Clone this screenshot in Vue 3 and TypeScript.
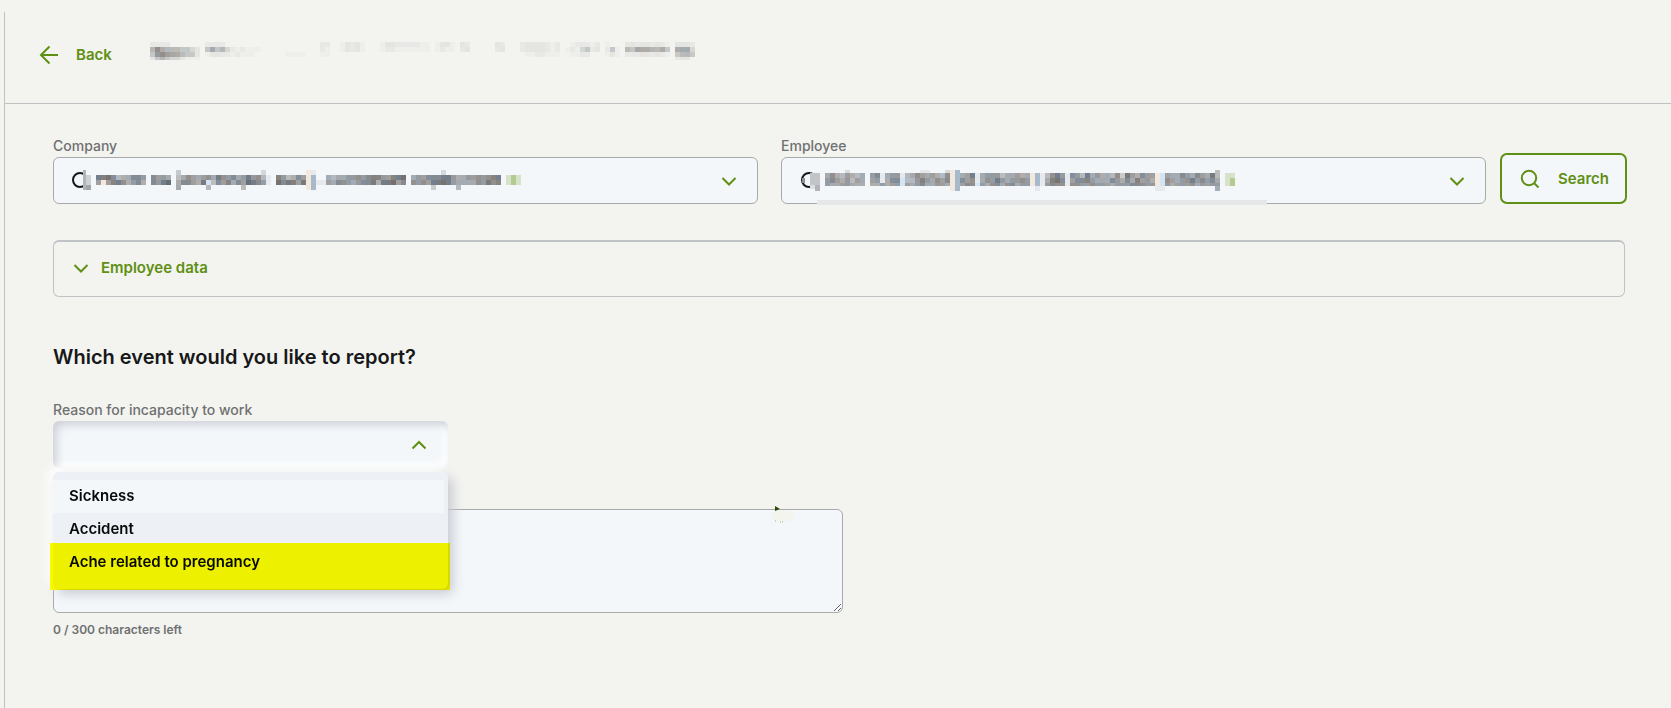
<script setup lang="ts">
import { ref } from 'vue'

interface Cell { x: number; y: number; h: number; fill: string }
// A run is: row index, first column, one character per cell.
type Run = [number, number, string]

const tones = [[118, 113, 110], [98, 112, 128], [104, 107, 112], [122, 116, 112], [100, 110, 118]]
const accents: Record<string, string> = {
  g: '#d6e2c9', G: '#b4ca8e', p: '#f3e8dd', b: '#a7bacb', s: '#d3e5f5', w: '#e6eaee', f: '#eeefeb', l: '#e8e9e6',
}

function mosaic(runs: Run[], heights: number[], back: number[]): Cell[] {
  const tops = heights.map((_, i) => heights.slice(0, i).reduce((a, b) => a + b, 0))
  const cells: Cell[] = []
  for (const [row, start, text] of runs) {
    Array.from(text).forEach((c, i) => {
      if (c === '.') return
      const col = start + i
      const k = parseInt(c, 10) / 9
      const tone = tones[(col * 3 + row * 2 + (col >> 2)) % 5]
      const fill = accents[c] ?? `rgb(${tone.map((t, n) => Math.round(back[n] + (t - back[n]) * k)).join(',')})`
      cells.push({ x: col * 5, y: tops[row], h: heights[row], fill })
    })
  }
  return cells
}

const titleCells = mosaic([
  [0, 0, 'llll'], [0, 11, 'llll'], [0, 34, 'll'], [0, 38, 'f1l1f'], [0, 46, 'f11lllllff'],
  [0, 57, 'f11f'], [0, 62, '1l'], [0, 69, '1l'], [0, 74, 'l1111lfl'], [0, 84, 'flllfl'],
  [0, 91, 'f'], [0, 95, '11l11l1lf'], [0, 105, '111l'],
  [1, 0, '4754443321'], [1, 11, '35342lflfff'], [1, 34, 'lf'], [1, 38, 'f1l1f'], [1, 46, 'fllfffffff'],
  [1, 57, 'flff'], [1, 62, 'l1'], [1, 69, 'l1'], [1, 74, 'l1111lfl'], [1, 83, 'flf23l1'],
  [1, 91, 'l3f'], [1, 95, '435554453'], [1, 105, '5552'],
  [2, 0, '3676554331'], [2, 11, 'f11llflfff'], [2, 27, 'ffff'], [2, 34, 'ff'], [2, 75, 'ffllfff'], [2, 84, 'ffll'], [2, 91, 'f1f'], [2, 95, 'lll11l1lf'], [2, 105, '3443'],
  [3, 0, '1343221fff'], [3, 105, 'l11'],
], [5, 5, 5, 3], [243, 244, 239])

const companyCells = mosaic([
  [0, 19, '3'], [0, 36, '2'], [0, 45, 'pw'], [0, 72, '2'],
  [1, 3, '8897455776'], [1, 14, '7665'], [1, 19, '457656758767568674w'], [1, 39, '864576pb'],
  [1, 49, '5455667678866889'], [1, 66, '566777886556676788'], [1, 85, 'gGg'],
  [2, 3, '6p68875675'], [2, 14, '7689'], [2, 19, '577658s47685769876w'], [2, 39, '978868pbww'],
  [2, 49, '6577656778588967'], [2, 66, '767688986555576878'], [2, 85, 'gGg'],
  [3, 19, '5'], [3, 25, '4'], [3, 32, '4'], [3, 45, 'pb'], [3, 70, '3'], [3, 75, '4'],
], [5, 5, 5, 5], [243, 247, 250])

const employeeCells = mosaic([
  [0, 4, '2'], [0, 19, '11'], [0, 24, '2pb'], [0, 78, '4'],
  [1, 0, '57546545'], [1, 9, '67w566w457656547pb568w5666455655'],
  [1, 41, 'pbw4786w76485655473865766w6545ps65576576584'],
  [2, 0, '67656465'], [2, 9, '66w577s446865767pb767w5768656676'],
  [2, 41, 'pbw5897w67786555765758665w6665ps76567867675'],
  [3, 0, '65566555'], [3, 9, '556566s656755665pb677s6577577566'],
  [3, 41, 'pbw6777w776676665666777665w665ps65666756666'],
  [4, 25, 'pb'], [4, 42, 'w'], [4, 66, 'ww'], [4, 78, '5'],
].map(([row, start, text]) => [row, start, start === 41 ? `${(text as string).slice(0, 25)}p${(text as string).slice(31, 43)}` : text] as Run)
  .concat([[1, 80, 'gg'], [2, 80, 'gG'], [3, 80, 'gG']]), [3, 5, 5, 3, 5], [243, 247, 250])

const options = ['Sickness', 'Accident', 'Ache related to pregnancy']
const selected = ref('')
const note = ref('')
</script>

<template>
  <div class="page">
    <header class="topbar">
      <a href="#" class="back">
        <svg width="20" height="20" viewBox="0 0 20 20"><path d="M19 10H2M10.500 1.500L2 10L10.500 18.500" /></svg>
        Back
      </a>
      <svg class="title" width="545" height="18" viewBox="0 0 545 18" shape-rendering="crispEdges" aria-hidden="true">
        <rect v-for="(c, i) in titleCells" :key="i" :x="c.x" :y="c.y" width="5" :height="c.h" :fill="c.fill" />
      </svg>
    </header>

    <main class="content">
      <form class="filters" @submit.prevent>
        <div class="field">
          <label for="company">Company</label>
          <div class="control">
            <select id="company"><option value=""></option></select>
            <svg class="value" width="500" height="24" viewBox="0 0 500 24" aria-hidden="true">
              <circle cx="10" cy="12" r="7" class="lens" />
              <g shape-rendering="crispEdges" transform="translate(11 2)">
                <path d="M2 0h3v20H2z" fill="#b3b6b9" />
                <path d="M5 5h5v10H5z" fill="#ced0d2" />
                <path d="M5 15h5v5H5z" fill="#a4a6a8" />
                <rect v-for="(c, i) in companyCells" :key="i" :x="c.x" :y="c.y" width="5" :height="c.h" :fill="c.fill" />
              </g>
            </svg>
            <svg class="chevron" width="16" height="16" viewBox="0 0 16 16"><path d="M1.500 5L8 11.500L14.500 5" /></svg>
          </div>
        </div>
        <div class="field">
          <label for="employee">Employee</label>
          <div class="control">
            <select id="employee"><option value=""></option></select>
            <svg class="value" width="500" height="24" viewBox="0 0 500 24" aria-hidden="true">
              <circle cx="11" cy="12" r="7" class="lens" />
              <g shape-rendering="crispEdges" transform="translate(27 2)">
                <path d="M-15 3h10v12h-10z" fill="#c2c4c7" />
                <path d="M-10 15h5v6h-5z" fill="#b1b3b6" />
                <path d="M-15 15h5v4h-5z" fill="#dcdfe2" />
                <path d="M-23 8h3v5h-3z" fill="#8d9092" />
                <rect v-for="(c, i) in employeeCells" :key="i" :x="c.x" :y="c.y" width="5" :height="c.h" :fill="c.fill" />
              </g>
            </svg>
            <span class="smear"></span>
            <svg class="chevron" width="16" height="16" viewBox="0 0 16 16"><path d="M1.500 5L8 11.500L14.500 5" /></svg>
          </div>
        </div>
        <button type="submit" class="search">
          <svg width="20" height="20" viewBox="0 0 20 20"><circle cx="9" cy="9" r="7.200" /><path d="M14 14L18.500 18.500" /></svg>
          Search
        </button>
      </form>

      <button type="button" class="panel">
        <svg width="16" height="16" viewBox="0 0 16 16"><path d="M1.500 5L8 11.500L14.500 5" /></svg>
        Employee data
      </button>

      <h2>Which event would you like to report?</h2>

      <div class="field reason">
        <label for="reason">Reason for incapacity to work</label>
        <div class="control open">
          <select id="reason" v-model="selected"><option value=""></option></select>
          <svg class="chevron" width="16" height="16" viewBox="0 0 16 16"><path d="M1.500 11.500L8 5L14.500 11.500" /></svg>
          <ul class="menu" role="listbox" aria-label="Reason for incapacity to work">
            <li v-for="o in options" :key="o" role="option" :aria-selected="selected === o">{{ o }}</li>
            <li class="marker" role="presentation"></li>
          </ul>
        </div>
      </div>

      <div class="note">
        <textarea v-model="note" aria-label="Note" maxlength="300"></textarea>
        <svg class="pointer" width="28" height="20" viewBox="0 0 28 20" aria-hidden="true">
          <ellipse cx="15" cy="13" rx="12" ry="6" fill="#f3f4ee" />
          <path d="M7 3l5 3l-5 2z" fill="#2f4708" />
          <path d="M7 18h1M12 19h1M14 19h1" stroke="#aab19b" />
        </svg>
      </div>
      <p class="counter">{{ note.length }} / 300 characters left</p>
    </main>
  </div>
</template>

<style>
html, body { background: #f3f4ef; }
body { margin: 0; }
</style>

<style scoped>
* { box-sizing: border-box; }
.page {
  min-height: calc(100vh - 12px);
  margin: 12px 0 0 4px;
  border-left: 1px solid #c0c1c3;
  font-family: Inter, "Liberation Sans", sans-serif;
  font-size: 15px;
  font-weight: 600;
  line-height: 20px;
  color: #17181a;
}
svg { display: block; flex: none; fill: none; stroke: none; }
.back svg, .search svg, .panel svg, .chevron { stroke: #5f8f13; stroke-width: 2; }
.topbar {
  display: flex;
  align-items: center;
  gap: 38px;
  height: 92px;
  padding: 0 34px 6px;
  border-bottom: 1px solid #c0c1c3;
}
.back { display: flex; align-items: center; gap: 17px; color: #5f8f13; text-decoration: none; }
.title { margin-bottom: 7px; }
.content { padding: 32px 46px 0 48px; }
.filters { display: flex; align-items: flex-end; gap: 14px; margin-right: -2px; }
.filters .field { flex: 1; }
.filters .field + .field { margin-left: 9px; }
label { display: block; height: 21px; font-size: 14px; font-weight: 500; line-height: 20px; color: #6f7072; }
.control { position: relative; }
select {
  display: block;
  width: 100%;
  height: 47px;
  appearance: none;
  border: 1px solid #a8a9ab;
  border-radius: 6px;
  background: #f3f7fa;
  font: inherit;
}
.value { position: absolute; left: 17px; top: 11px; pointer-events: none; }
.lens { stroke: #17181a; stroke-width: 2; }
.smear { position: absolute; left: 36px; bottom: -1px; width: 450px; height: 5px; background: #e6e7e9; }
.chevron { position: absolute; right: 21px; top: 16px; pointer-events: none; }
.search {
  display: flex;
  align-items: center;
  gap: 18px;
  height: 51px;
  padding: 0 16px 0 18px;
  border: 2px solid #5f8f13;
  border-radius: 7px;
  background: #f3f7fa;
  color: #5f8f13;
  font: inherit;
}
.panel {
  display: flex;
  align-items: center;
  gap: 12px;
  width: 100%;
  height: 57px;
  margin-top: 36px;
  padding: 0 19px 2px;
  border: 1px solid #c0c3c5;
  border-top-width: 2px;
  border-radius: 6px;
  background: none;
  color: #5f8f13;
  font: inherit;
}
h2 { margin: 48px 0 31px; font-size: 20px; line-height: 24px; font-weight: 600; }
.reason { width: calc(25% + 2px); }
.open select {
  border: 0;
  box-shadow: inset 4px 4px 8px #cfd1d9, inset -4px -4px 8px #ffffff;
}
.menu {
  position: absolute;
  z-index: 2;
  top: 51px;
  left: 0;
  right: 0;
  height: 117px;
  margin: 0;
  padding: 8px 0;
  list-style: none;
  border-radius: 6px;
  background: #edf1f5;
  box-shadow: 5px 5px 12px #c9cbd2, -5px -5px 10px #ffffff;
  color: #08090a;
}
.menu li { height: 33px; margin-right: 4px; padding: 0 16px; line-height: 32px; }
.menu li:first-child { background: #f3f7fa; }
.menu .marker {
  position: absolute;
  left: -3px;
  right: -2px;
  bottom: -1px;
  height: 47px;
  margin: 0;
  background: #ffff00;
  mix-blend-mode: multiply;
}
.note { position: relative; width: calc(50% + 4px); margin-top: 41px; }
textarea {
  display: block;
  width: 100%;
  height: 104px;
  border: 1px solid #a8a9ab;
  border-radius: 6px;
  background: #f3f7fa;
  font: inherit;
}
.pointer { position: absolute; right: 47px; top: -6px; pointer-events: none; }
.counter { margin: 7px 0 0; font-size: 12px; color: #6f7072; }
</style>
